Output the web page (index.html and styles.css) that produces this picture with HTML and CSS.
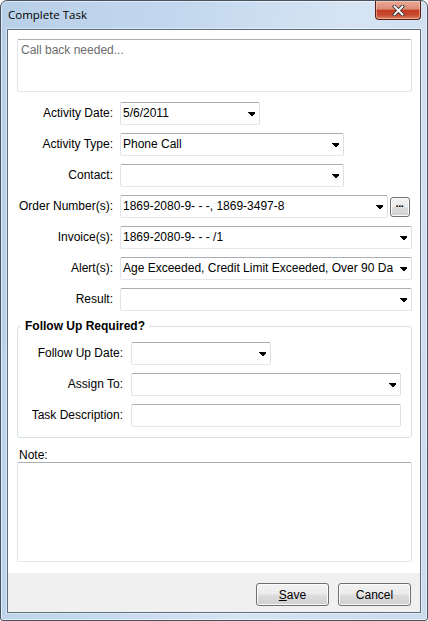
FILE: index.html
```html
<!DOCTYPE html>
<html>
<head>
<meta charset="utf-8">
<title>Complete Task</title>
<link rel="stylesheet" href="styles.css">
</head>
<body>
<div class="window">
  <div class="titlebar">
    <span class="title">Complete Task</span>
    <button class="close-btn" aria-label="Close">
      <svg width="13" height="11" viewBox="0 0 13 11">
        <path d="M2.5 1.5 L10.5 9.5 M10.5 1.5 L2.5 9.5" stroke="#3b3b3b" stroke-width="3.6" stroke-linecap="square" fill="none"/>
        <path d="M2.5 1.5 L10.5 9.5 M10.5 1.5 L2.5 9.5" stroke="#ffffff" stroke-width="1.8" stroke-linecap="square" fill="none"/>
      </svg>
    </button>
  </div>
  <div class="client">
    <div class="main">
      <div class="textbox subject"><span class="placeholder">Call back needed...</span></div>

      <div class="form">
        <div class="lbl">Activity Date:</div>
        <div class="textbox combo w-date"><span class="val">5/6/2011</span><svg class="arrow" width="7" height="4" viewBox="0 0 7 4"><path d="M0 0h7v1l-3 3h-1l-3-3z" fill="#000"/></svg></div>

        <div class="lbl">Activity Type:</div>
        <div class="textbox combo w-mid"><span class="val">Phone Call</span><svg class="arrow" width="7" height="4" viewBox="0 0 7 4"><path d="M0 0h7v1l-3 3h-1l-3-3z" fill="#000"/></svg></div>

        <div class="lbl">Contact:</div>
        <div class="textbox combo w-mid"><span class="val"></span><svg class="arrow" width="7" height="4" viewBox="0 0 7 4"><path d="M0 0h7v1l-3 3h-1l-3-3z" fill="#000"/></svg></div>

        <div class="lbl">Order Number(s):</div>
        <div class="field-row">
          <div class="textbox combo w-order"><span class="val">1869-2080-9- - -, 1869-3497-8</span><svg class="arrow" width="7" height="4" viewBox="0 0 7 4"><path d="M0 0h7v1l-3 3h-1l-3-3z" fill="#000"/></svg></div>
          <button class="btn mini-btn">···</button>
        </div>

        <div class="lbl">Invoice(s):</div>
        <div class="textbox combo"><span class="val">1869-2080-9- - - /1</span><svg class="arrow" width="7" height="4" viewBox="0 0 7 4"><path d="M0 0h7v1l-3 3h-1l-3-3z" fill="#000"/></svg></div>

        <div class="lbl">Alert(s):</div>
        <div class="textbox combo"><span class="val">Age Exceeded, Credit Limit Exceeded, Over 90 Da</span><svg class="arrow" width="7" height="4" viewBox="0 0 7 4"><path d="M0 0h7v1l-3 3h-1l-3-3z" fill="#000"/></svg></div>

        <div class="lbl">Result:</div>
        <div class="textbox combo"><span class="val"></span><svg class="arrow" width="7" height="4" viewBox="0 0 7 4"><path d="M0 0h7v1l-3 3h-1l-3-3z" fill="#000"/></svg></div>
      </div>

      <fieldset class="group">
        <legend>Follow Up Required?</legend>
        <div class="form group-grid">
          <div class="lbl">Follow Up Date:</div>
          <div class="textbox combo w-date"><span class="val"></span><svg class="arrow" width="7" height="4" viewBox="0 0 7 4"><path d="M0 0h7v1l-3 3h-1l-3-3z" fill="#000"/></svg></div>

          <div class="lbl">Assign To:</div>
          <div class="textbox combo"><span class="val"></span><svg class="arrow" width="7" height="4" viewBox="0 0 7 4"><path d="M0 0h7v1l-3 3h-1l-3-3z" fill="#000"/></svg></div>

          <div class="lbl">Task Description:</div>
          <div class="textbox combo"><span class="val"></span></div>
        </div>
      </fieldset>

      <div class="note-label">Note:</div>
      <div class="textbox note"></div>
    </div>
    <div class="footer">
      <button class="btn"><u>S</u>ave</button>
      <button class="btn">Cancel</button>
    </div>
  </div>
</div>
</body>
</html>
```

FILE: styles.css
```css
html, body {
  margin: 0;
  padding: 0;
  background: #ffffff;
}

body {
  font-family: "Liberation Sans", Arial, sans-serif;
  font-size: 12px;
  color: #000000;
}

.window {
  width: 428px;
  height: 621px;
  box-sizing: border-box;
  border: 1px solid #48535f;
  border-radius: 7px 7px 3px 3px;
  background:
    linear-gradient(100deg, #b8cfe8 0%, #c3d8ee 35%, #d6e4f3 65%, #cadbee 100%);
  box-shadow: inset 0 0 0 1px rgba(255, 255, 255, 0.55);
  padding: 0 6px 7px;
  display: flex;
  flex-direction: column;
  overflow: hidden;
}

.titlebar {
  height: 28px;
  flex-shrink: 0;
  display: flex;
  align-items: center;
}

.title {
  flex: 1;
  padding-left: 1px;
  font-family: "Open Sans", "Noto Sans", sans-serif;
  font-size: 11.5px;
  line-height: 16px;
  color: #000;
}

.close-btn {
  align-self: flex-start;
  width: 46px;
  height: 19px;
  margin: 0;
  padding: 0;
  box-sizing: border-box;
  border: 1px solid #5a2017;
  border-top: none;
  border-radius: 0 0 4px 4px;
  background: linear-gradient(#e9ab9b 0%, #dc8a74 45%, #c43c22 52%, #c94a2f 78%, #db8666 100%);
  box-shadow: inset 0 0 0 1px rgba(255, 220, 200, 0.45);
  display: flex;
  align-items: center;
  justify-content: center;
}

.close-btn svg {
  display: block;
}

.client {
  flex: 1;
  min-height: 0;
  background: #ffffff;
  border: 1px solid #5e6c7b;
  box-shadow: 0 0 0 1px rgba(255, 255, 255, 0.45);
  display: flex;
  flex-direction: column;
}

.main {
  flex: 1;
  padding: 9px 8px 0 9px;
  display: flex;
  flex-direction: column;
}

.textbox {
  box-sizing: border-box;
  background: #ffffff;
  border: 1px solid;
  border-color: #abadb3 #dbdfe6 #e3e9ef #e2e3ea;
  border-radius: 2px;
}

.subject {
  height: 53px;
  padding: 3px 3px;
  line-height: 15px;
}

.placeholder {
  color: #6d6d6d;
}

.form {
  display: grid;
  grid-template-columns: 96px 1fr;
  column-gap: 7px;
  row-gap: 8px;
  grid-auto-rows: 23px;
  margin-top: 10px;
}

.lbl {
  text-align: right;
  line-height: 23px;
  white-space: nowrap;
}

.combo {
  height: 23px;
  display: flex;
  align-items: center;
  padding-left: 2px;
  min-width: 0;
}

.combo .val {
  flex: 1;
  min-width: 0;
  overflow: hidden;
  white-space: nowrap;
  line-height: 15px;
}

.combo .arrow {
  flex-shrink: 0;
  display: block;
  margin: 0 4px 0 5px;
  shape-rendering: crispEdges;
}

.w-date {
  width: 140px;
}

.w-mid {
  width: 224px;
}

.w-order {
  width: 268px;
  flex-shrink: 0;
}

.field-row {
  display: flex;
  align-items: center;
  gap: 2px;
}

.btn {
  box-sizing: border-box;
  width: 73px;
  height: 23px;
  margin: 0;
  padding: 0;
  border: 1px solid #707070;
  border-radius: 3px;
  background: linear-gradient(#f2f2f2 0%, #ebebeb 48%, #dddddd 52%, #cfcfcf 100%);
  box-shadow: inset 0 0 0 1px #fbfbfb;
  font-family: "Liberation Sans", Arial, sans-serif;
  font-size: 12px;
  line-height: 20px;
  color: #000;
  text-align: center;
}

.mini-btn {
  width: 20px;
  height: 20px;
  font-weight: bold;
  font-size: 11px;
  line-height: 17px;
  letter-spacing: -1px;
  padding-right: 1px;
}

.group {
  margin: 8px 0 0;
  padding: 8px 10px 10px 0;
  border: 1px solid #d5dfe5;
  border-radius: 3px;
  min-width: 0;
}

.group legend {
  margin-left: 3px;
  padding: 0 4px;
  font-weight: bold;
  line-height: 15px;
}

.group-grid {
  grid-template-columns: 105px 1fr;
  column-gap: 8px;
  margin-top: 0;
}

.note-label {
  margin-top: 10px;
  padding-left: 2px;
  line-height: 14px;
}

.note {
  height: 100px;
}

.footer {
  height: 39px;
  flex-shrink: 0;
  box-sizing: border-box;
  background: #f0f0f0;
  display: flex;
  justify-content: flex-end;
  align-items: flex-start;
  gap: 9px;
  padding: 10px 9px 0 0;
}
```
